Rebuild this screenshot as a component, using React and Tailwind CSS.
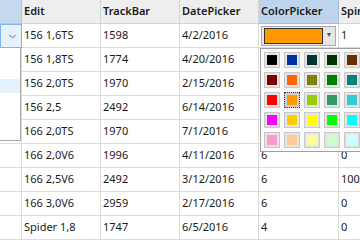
import { ChevronDown } from "lucide-react";

const rows = [
  ["156 1,6TS", "1598", "4/2/2016", null, "1"],
  ["156 1,8TS", "1774", "4/20/2016", "6", "0"],
  ["156 2,0TS", "1970", "2/15/2016", "6", "0"],
  ["156 2,5", "2492", "6/14/2016", "6", "0"],
  ["166 2,0TS", "1970", "7/1/2016", "6", "0"],
  ["166 2,0V6", "1996", "4/11/2016", "6", "0"],
  ["166 2,5V6", "2492", "3/12/2016", "6", "100"],
  ["166 3,0V6", "2959", "2/17/2016", "6", "0"],
  ["Spider 1,8", "1747", "6/5/2016", "4", "0"],
];

const palette = [
  ["#000000", "#0033a0", "#003333", "#003300", "#663300"],
  ["#800000", "#ff6600", "#808000", "#008000", "#008080"],
  ["#ff0000", "#ff9900", "#99cc00", "#339966", "#33cccc"],
  ["#ff00ff", "#ffcc00", "#ffff00", "#00ff00", "#00ffff"],
  ["#ff99cc", "#ffcc99", "#ffff99", "#ccffcc", "#ccffff"],
];

const widths = ["w-[22px]", "w-[79px]", "w-[79px]", "w-[79px]", "w-[80px]", "w-[60px]"];

export default function App() {
  return (
    <div
      className="relative w-[360px] h-[240px] overflow-hidden bg-white text-[11px] text-[#1a1a1a]"
      style={{ fontFamily: "'Noto Sans', 'Open Sans', sans-serif" }}
    >
      {/* Header */}
      <div className="flex h-[24px]">
        <div className={`${widths[0]} shrink-0 bg-[#c5d9ee] border-r border-b border-[#b5c8dc]`}></div>
        {["Edit", "TrackBar", "DatePicker", "ColorPicker", "Spin"].map((h, i) => (
          <div
            key={h}
            className={`${widths[i + 1]} shrink-0 flex items-center px-[2px] font-semibold border-r border-b whitespace-nowrap ${
              h === "ColorPicker" ? "bg-[#bdd4ec] border-[#a9c0d8]" : "bg-[#eeeeee] border-[#d4d4d4]"
            }`}
          >
            {h}
          </div>
        ))}
      </div>

      {/* Rows */}
      {rows.map((r, ri) => (
        <div key={ri} className="flex h-[24px]">
          {ri === 0 ? (
            <div className={`${widths[0]} shrink-0 flex items-center justify-center bg-[#e5f1fb] border border-[#7eb4ea]`}>
              <ChevronDown size={11} strokeWidth={2} className="text-[#555] ml-[2px]" />
            </div>
          ) : (
            <div className={`${widths[0]} shrink-0 border-r border-b border-[#dcdcdc]`}></div>
          )}
          {r.map((c, ci) => (
            <div
              key={ci}
              className={`${widths[ci + 1]} shrink-0 flex items-center px-[2px] border-r border-b border-[#dcdcdc] whitespace-nowrap overflow-hidden`}
            >
              {ri === 0 && ci === 3 ? (
                <div className="flex items-center w-[76px] h-[20px] border border-[#acacac] bg-[#e6e6e6]">
                  <div className="ml-[2px] w-[59px] h-[16px] border border-[#333333] bg-[#ff9900]"></div>
                  <div className="flex-1 flex justify-center text-[7px] text-[#555]">▼</div>
                </div>
              ) : (
                c
              )}
            </div>
          ))}
        </div>
      ))}

      {/* First column dropdown list */}
      <div className="absolute left-0 top-[48px] w-[21px] h-[93px] bg-white border-r border-b border-[#a8a8a8]">
        <div className="mt-[31px] h-[14px] bg-[#e5f1fb]"></div>
      </div>

      {/* Color palette popup */}
      <div className="absolute left-[260px] top-[48px] w-[110px] h-[104px] bg-[#fbfbfb] border border-[#a0a0a0]">
        <div className="flex flex-col gap-[4px] pt-[3px] pl-[3px]">
          {palette.map((row, pi) => (
            <div key={pi} className="flex gap-[4px]">
              {row.map((col, ci) => {
                const selected = pi === 2 && ci === 1;
                return (
                  <div
                    key={ci}
                    className={`w-[16px] h-[16px] p-[2px] ${
                      selected
                        ? "border border-dotted border-[#333] bg-[#cfcfcf]"
                        : "border border-[#c8c8c8] bg-[#e4e4e4]"
                    }`}
                  >
                    <div className="w-full h-full" style={{ backgroundColor: col }}></div>
                  </div>
                );
              })}
            </div>
          ))}
        </div>
      </div>
    </div>
  );
}
